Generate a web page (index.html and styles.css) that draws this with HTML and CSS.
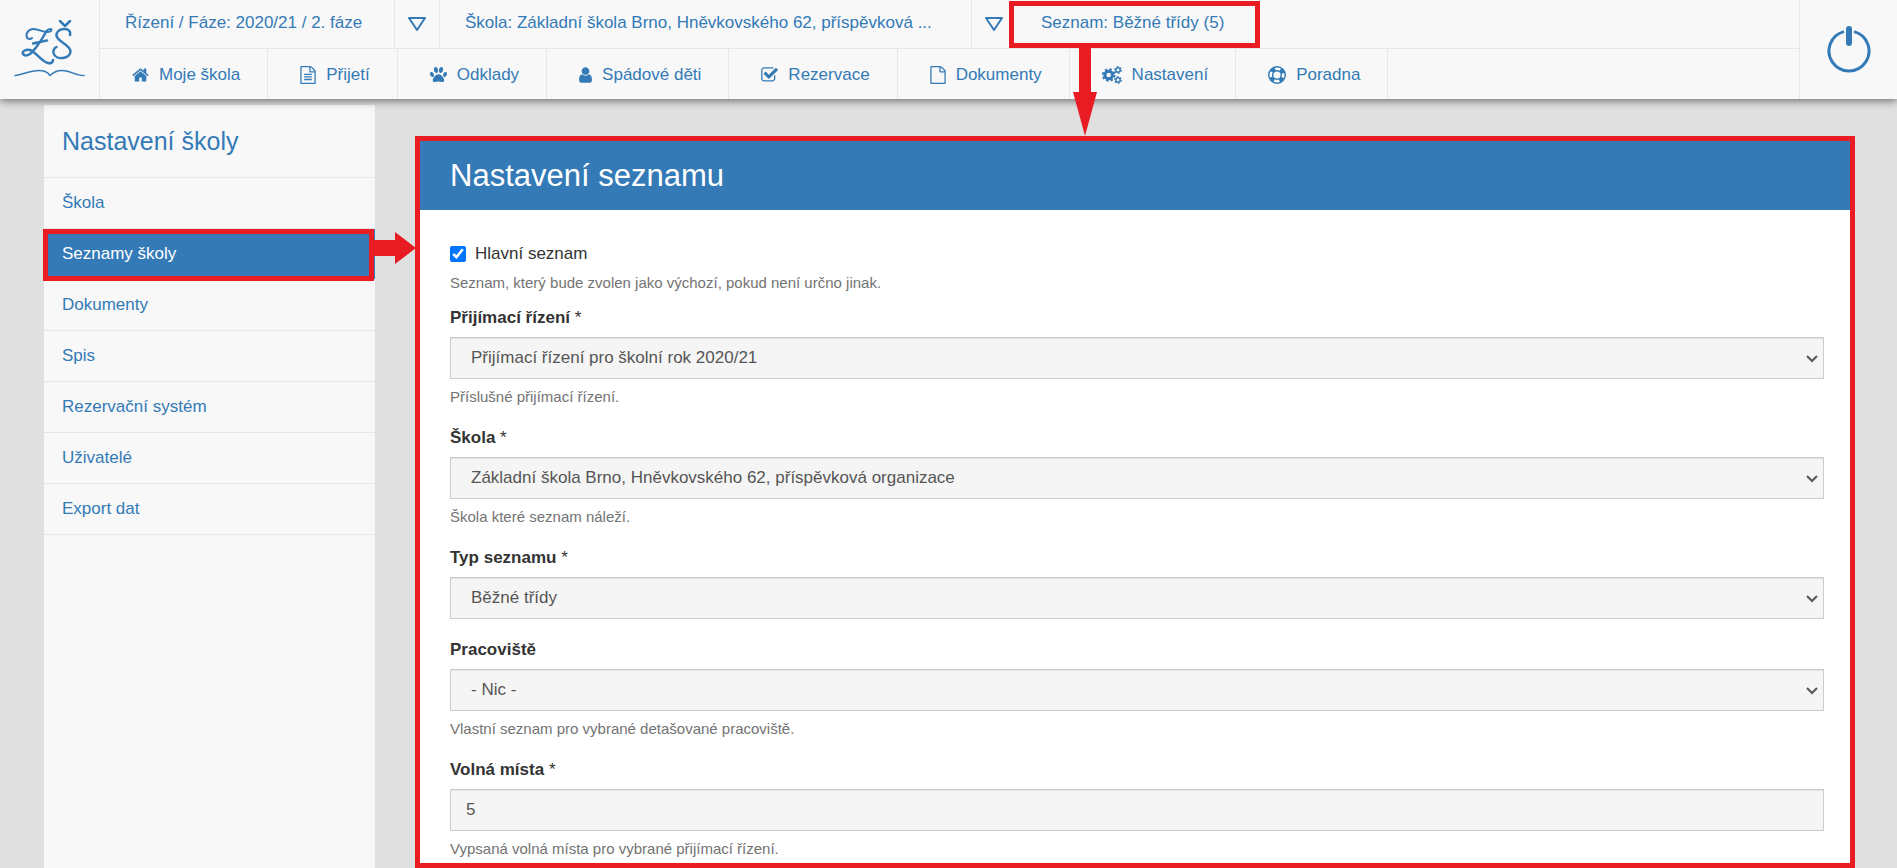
FILE: index.html
```html
<!DOCTYPE html>
<html lang="cs">
<head>
<meta charset="utf-8">
<title>Nastavení seznamu</title>
<link rel="stylesheet" href="styles.css">
</head>
<body>
<header class="topbar">
  <a class="logo" href="#" aria-label="ZŠ">
    <svg width="72" height="60" viewBox="14 20 72 60" fill="none" stroke="#337ab7" stroke-linecap="round" stroke-linejoin="round">
      <path stroke-width="2.500" d="M60 21l5 5 5-5"/>
      <path stroke-width="2" d="M32 38c-2 2-5 1-5.500-2-.5-4 3-7 7-7 5 0 9 3 13 3 3 0 5-1 5-2 0-2-4-1-6 2"/>
      <path stroke-width="2.500" d="M46 32c-4 7-8 14-13 19-3 4-8 6-10 3-1-3 3-5 7-4 6 2 12 12 18 13 3 1 5-1 5-3M33 43.500c5-1 9-2 14-3"/>
      <path stroke-width="2.500" d="M70 35c1-4-2-6.500-6-6-5 0-9 4-7 8 2 5 13 8 13.500 14 .5 8-15 10-17 2-.5-3 1-5 3-6"/>
      <path stroke-width="1.500" d="M15 75.500c8-1 15-5 24-5 6 0 9 2 11 5 3-3 7-5 12-5 8 0 13 5 22 5"/>
    </svg>
  </a>
  <div class="bars">
    <nav class="row context" aria-label="Kontext">
      <a class="cell phase" href="#">Řízení / Fáze: 2020/21 / 2. fáze</a>
      <button class="cell toggle" type="button" aria-label="Vybrat fázi">
        <svg width="20" height="16" viewBox="0 0 20 16" fill="none" stroke="#337ab7" stroke-width="2" stroke-linejoin="round"><path d="M2 2h16l-8 12z"/></svg>
      </button>
      <a class="cell school" href="#">Škola: Základní škola Brno, Hněvkovského 62, příspěvková ...</a>
      <button class="cell toggle last" type="button" aria-label="Vybrat školu">
        <svg width="20" height="16" viewBox="0 0 20 16" fill="none" stroke="#337ab7" stroke-width="2" stroke-linejoin="round"><path d="M2 2h16l-8 12z"/></svg>
      </button>
      <a class="cell last marked" href="#">Seznam: Běžné třídy (5)
        <svg class="arrow-down" width="24" height="88" viewBox="0 0 24 88" fill="#e91c24"><path d="M6 0h12v44h6L12 88 0 44h6z"/></svg>
      </a>
    </nav>
    <nav class="row menu" aria-label="Hlavní menu">
      <a class="cell" href="#"><svg width="17" height="18" viewBox="64 0 1664 1792"><path d="M1472 992v480q0 26-19 45t-45 19h-384v-384h-256v384h-384q-26 0-45-19t-19-45v-480q0-1 .5-3t.5-3l575-474 575 474q1 2 1 6zm223-69l-62 74q-8 9-21 11h-3q-13 0-21-7l-692-577-692 577q-12 8-24 7-13-2-21-11l-62-74q-8-10-7-23.500t11-21.500l719-599q32-26 76-26t76 26l244 204v-195q0-14 9-23t23-9h192q14 0 23 9t9 23v408l219 182q10 8 11 21.500t-7 23.500z"/></svg>Moje škola</a>
      <a class="cell" href="#"><svg width="16" height="18" viewBox="128 0 1536 1792"><path d="M1596 380q28 28 48 76t20 88v1152q0 40-28 68t-68 28h-1344q-40 0-68-28t-28-68v-1600q0-40 28-68t68-28h896q40 0 88 20t76 48zm-444-244v376h376q-10-29-22-41l-313-313q-12-12-41-22zm384 1528v-1024h-416q-40 0-68-28t-28-68v-416h-768v1536h1280zm-1024-864q0-14 9-23t23-9h704q14 0 23 9t9 23v64q0 14-9 23t-23 9h-704q-14 0-23-9t-9-23v-64zm736 224q14 0 23 9t9 23v64q0 14-9 23t-23 9h-704q-14 0-23-9t-9-23v-64q0-14 9-23t23-9h704zm0 256q14 0 23 9t9 23v64q0 14-9 23t-23 9h-704q-14 0-23-9t-9-23v-64q0-14 9-23t23-9h704z"/></svg>Přijetí</a>
      <a class="cell" href="#"><svg width="17" height="18" viewBox="0 0 17 18"><ellipse cx="6" cy="4" rx="2" ry="3" transform="rotate(-8 6 4)"/><ellipse cx="11" cy="4" rx="2" ry="3" transform="rotate(8 11 4)"/><ellipse cx="2" cy="8.500" rx="1.800" ry="2.600" transform="rotate(-20 2 8.500)"/><ellipse cx="15" cy="8.500" rx="1.800" ry="2.600" transform="rotate(20 15 8.500)"/><path d="M8.500 8.200c2.500 0 5.700 3.600 5.700 6 0 3-3.500 1.400-5.700 1.400s-5.700 1.600-5.700-1.400c0-2.400 3.200-6 5.700-6z"/></svg>Odklady</a>
      <a class="cell" href="#"><svg width="13" height="18" viewBox="256 0 1280 1792"><path d="M1536 1399q0 109-62.500 187t-150.500 78h-854q-88 0-150.500-78t-62.500-187q0-85 8.500-160.500t31.500-152 58.500-131 94-89 134.500-34.500q131 128 313 128t313-128q76 0 134.500 34.500t94 89 58.500 131 31.500 152 8.500 160.500zm-256-887q0 159-112.500 271.500t-271.500 112.500-271.500-112.500-112.500-271.500 112.500-271.500 271.500-112.500 271.500 112.500 112.500 271.500z"/></svg>Spádové děti</a>
      <a class="cell" href="#"><svg width="17" height="18" viewBox="64 0 1664 1792"><path d="M1472 930v318q0 119-84.500 203.500t-203.500 84.500h-832q-119 0-203.500-84.500t-84.500-203.500v-832q0-119 84.500-203.500t203.500-84.500h832q63 0 117 25 15 7 18 23 3 17-9 29l-49 49q-10 10-23 10-3 0-9-2-23-6-45-6h-832q-66 0-113 47t-47 113v832q0 66 47 113t113 47h832q66 0 113-47t47-113v-254q0-13 9-22l64-64q10-10 23-10 6 0 12 3 20 8 20 29zm231-489l-814 814q-24 24-57 24t-57-24l-430-430q-24-24-24-57t24-57l110-110q24-24 57-24t57 24l263 263 647-647q24-24 57-24t57 24l110 110q24 24 24 57t-24 57z"/></svg>Rezervace</a>
      <a class="cell" href="#"><svg width="16" height="18" viewBox="128 0 1536 1792"><path d="M1596 380q28 28 48 76t20 88v1152q0 40-28 68t-68 28h-1344q-40 0-68-28t-28-68v-1600q0-40 28-68t68-28h896q40 0 88 20t76 48zm-444-244v376h376q-10-29-22-41l-313-313q-12-12-41-22zm384 1528v-1024h-416q-40 0-68-28t-28-68v-416h-768v1536h1280z"/></svg>Dokumenty</a>
      <a class="cell" href="#"><svg width="20" height="18" viewBox="0 0 20 18" fill="none" stroke="#337ab7"><circle cx="6.700" cy="9" r="3.800" stroke-width="3"/><circle cx="6.700" cy="9" r="5.800" stroke-width="2" stroke-dasharray="2.400 2.155"/><circle cx="16" cy="4" r="2.200" stroke-width="1.500"/><circle cx="16" cy="4" r="3.300" stroke-width="1.200" stroke-dasharray="1.700 1.756"/><circle cx="16" cy="14" r="2.200" stroke-width="1.500"/><circle cx="16" cy="14" r="3.300" stroke-width="1.200" stroke-dasharray="1.700 1.756"/></svg>Nastavení</a>
      <a class="cell" href="#"><svg width="18" height="18" viewBox="0 0 18 18" fill="none" stroke="#337ab7"><circle cx="9" cy="9" r="8.300" stroke-width="1.400"/><circle cx="9" cy="9" r="4.300" stroke-width="1.400"/><circle cx="9" cy="9" r="6.300" stroke-width="4" stroke-dasharray="4.400 5.496" stroke-dashoffset="-2.748"/></svg>Poradna</a>
    </nav>
  </div>
  <button class="power" type="button" aria-label="Odhlásit">
    <svg width="44" height="48" viewBox="0 0 44 48" fill="none" stroke="#337ab7" stroke-linecap="round"><path stroke-width="3" stroke-linecap="butt" d="M17 5.600A20 20 0 1 0 27 5.600"/><path stroke-width="6" d="M22 3v14"/></svg>
  </button>
</header>
<div class="page">
  <nav class="sidebar" aria-label="Nastavení školy">
    <h2 class="side-title">Nastavení školy</h2>
    <a class="side-link" href="#">Škola</a>
    <a class="side-link active" href="#" aria-current="page">Seznamy školy
      <svg class="arrow-right" width="42" height="32" viewBox="0 0 42 32" fill="#e91c24"><path d="M0 8h21V0l21 16-21 16v-8H0z"/></svg>
    </a>
    <a class="side-link" href="#">Dokumenty</a>
    <a class="side-link" href="#">Spis</a>
    <a class="side-link" href="#">Rezervační systém</a>
    <a class="side-link" href="#">Uživatelé</a>
    <a class="side-link" href="#">Export dat</a>
  </nav>
  <main class="panel">
    <h1 class="panel-title">Nastavení seznamu</h1>
    <form class="form">
      <div class="check">
        <input class="box" type="checkbox" id="main-list" checked>
        <label for="main-list">Hlavní seznam</label>
      </div>
      <p class="help check-help">Seznam, který bude zvolen jako výchozí, pokud není určno jinak.</p>
      <div class="group">
        <label class="label" for="proceeding">Přijímací řízení <span class="star">*</span></label>
        <div class="pick">
          <select class="control" id="proceeding"><option>Přijímací řízení pro školní rok 2020/21</option></select>
          <svg class="chevron" width="12" height="8" viewBox="0 0 12 8"><path d="M1 1l5 5 5-5"/></svg>
        </div>
        <p class="help">Příslušné přijímací řízení.</p>
      </div>
      <div class="group">
        <label class="label" for="school">Škola <span class="star">*</span></label>
        <div class="pick">
          <select class="control" id="school"><option>Základní škola Brno, Hněvkovského 62, příspěvková organizace</option></select>
          <svg class="chevron" width="12" height="8" viewBox="0 0 12 8"><path d="M1 1l5 5 5-5"/></svg>
        </div>
        <p class="help">Škola které seznam náleží.</p>
      </div>
      <div class="group">
        <label class="label" for="type">Typ seznamu <span class="star">*</span></label>
        <div class="pick">
          <select class="control" id="type"><option>Běžné třídy</option></select>
          <svg class="chevron" width="12" height="8" viewBox="0 0 12 8"><path d="M1 1l5 5 5-5"/></svg>
        </div>
      </div>
      <div class="group">
        <label class="label" for="place">Pracoviště</label>
        <div class="pick">
          <select class="control" id="place"><option>- Nic -</option></select>
          <svg class="chevron" width="12" height="8" viewBox="0 0 12 8"><path d="M1 1l5 5 5-5"/></svg>
        </div>
        <p class="help">Vlastní seznam pro vybrané detašované pracoviště.</p>
      </div>
      <div class="group">
        <label class="label" for="seats">Volná místa <span class="star">*</span></label>
        <input class="control" id="seats" type="text" value="5">
        <p class="help">Vypsaná volná místa pro vybrané přijímací řízení.</p>
      </div>
    </form>
  </main>
</div>
</body>
</html>
```
FILE: styles.css
```css
* { box-sizing: border-box; }

body {
  margin: 0;
  min-height: 100vh;
  display: flex;
  flex-direction: column;
  background: #e0e0e0;
  color: #333;
  font: 17px/24px "Liberation Sans", Arial, sans-serif;
}

a { color: #337ab7; text-decoration: none; }
button { border: 0; padding: 0; background: none; font: inherit; cursor: pointer; }

.topbar {
  position: relative;
  z-index: 1;
  display: flex;
  background: #f8f8f8;
  box-shadow: 0 2px 8px rgba(0, 0, 0, 0.5);
}
.logo {
  display: flex;
  align-items: center;
  justify-content: center;
  width: 100px;
  border-right: 1px solid #e7e7e7;
}
.bars { flex: 1; }
.row { display: flex; }
.context { height: 49px; border-bottom: 1px solid #e7e7e7; }
.menu { height: 50px; }
.cell {
  display: flex;
  align-items: center;
  padding: 0 25px;
  border-right: 1px solid #e7e7e7;
  white-space: nowrap;
}
.context .cell { padding-bottom: 3px; }
.phase { min-width: 295px; }
.school { min-width: 532px; }
.cell.toggle { padding: 0 12px; }
.cell.last { border-right: 0; }
.menu .cell { gap: 10px; padding: 1px 27px 0 32px; }
.menu svg { fill: #337ab7; }
.menu svg[fill="none"] { fill: none; }
.cell.marked { position: relative; padding-right: 32px; }
.marked::after {
  content: "";
  position: absolute;
  inset: 1px -4px 0 -7px;
  border: 5px solid #e91c24;
}
.arrow-down { position: absolute; left: 57px; top: 48px; }
.power {
  display: flex;
  align-items: center;
  justify-content: center;
  width: 98px;
  border-left: 1px solid #e7e7e7;
}

.page {
  flex: 1;
  display: flex;
  align-items: stretch;
  gap: 40px;
  padding: 0 42px 0 44px;
}
.sidebar { width: 331px; margin-top: 6px; background: #f8f8f8; }
.side-title {
  margin: 0;
  padding: 20px 18px;
  border-bottom: 1px solid #e7e7e7;
  color: #337ab7;
  font-size: 25px;
  font-weight: 400;
  line-height: 32px;
}
.side-link {
  display: block;
  padding: 13px 18px;
  border-bottom: 1px solid #e7e7e7;
}
.side-link.active { position: relative; background: #337ab7; color: #fff; }
.side-link.active::after {
  content: "";
  position: absolute;
  inset: 0 1px -2px -1px;
  border: 5px solid #e91c24;
}
.arrow-right { position: absolute; left: 330px; top: 3px; }

.panel {
  flex: 1;
  margin-top: 37px;
  border: 5px solid #e91c24;
  background: #fff;
}
.panel-title {
  margin: 0;
  padding: 15px 30px 14px;
  background: #337ab7;
  color: #fff;
  font-size: 31px;
  font-weight: 400;
  line-height: 40px;
}
.form { padding: 32px 26px 0 30px; }
.check { display: flex; align-items: center; gap: 9px; }
.box { width: 16px; height: 16px; margin: 0; accent-color: #0075ff; }
.group { margin-bottom: 19px; }
.group:last-child { margin-bottom: 0; }
.label { display: block; margin-bottom: 7px; font-weight: 700; }
.star { font-weight: 400; }
.help { margin: 7px 0 0; color: #737373; font-size: 15px; line-height: 21px; }
.check-help { margin: 6px 0 13px; }
.pick { position: relative; }
.control {
  display: block;
  width: 100%;
  height: 42px;
  padding: 0 15px;
  border: 1px solid #ccc;
  border-radius: 0;
  background-color: #f5f5f5;
  box-shadow: inset 0 1px 1px rgba(0, 0, 0, 0.075);
  color: #555;
  font: inherit;
}
select.control { appearance: none; padding: 0 30px 0 20px; }
.chevron {
  position: absolute;
  right: 6px;
  top: 18px;
  fill: none;
  stroke: #555;
  stroke-width: 2;
  pointer-events: none;
}
```
